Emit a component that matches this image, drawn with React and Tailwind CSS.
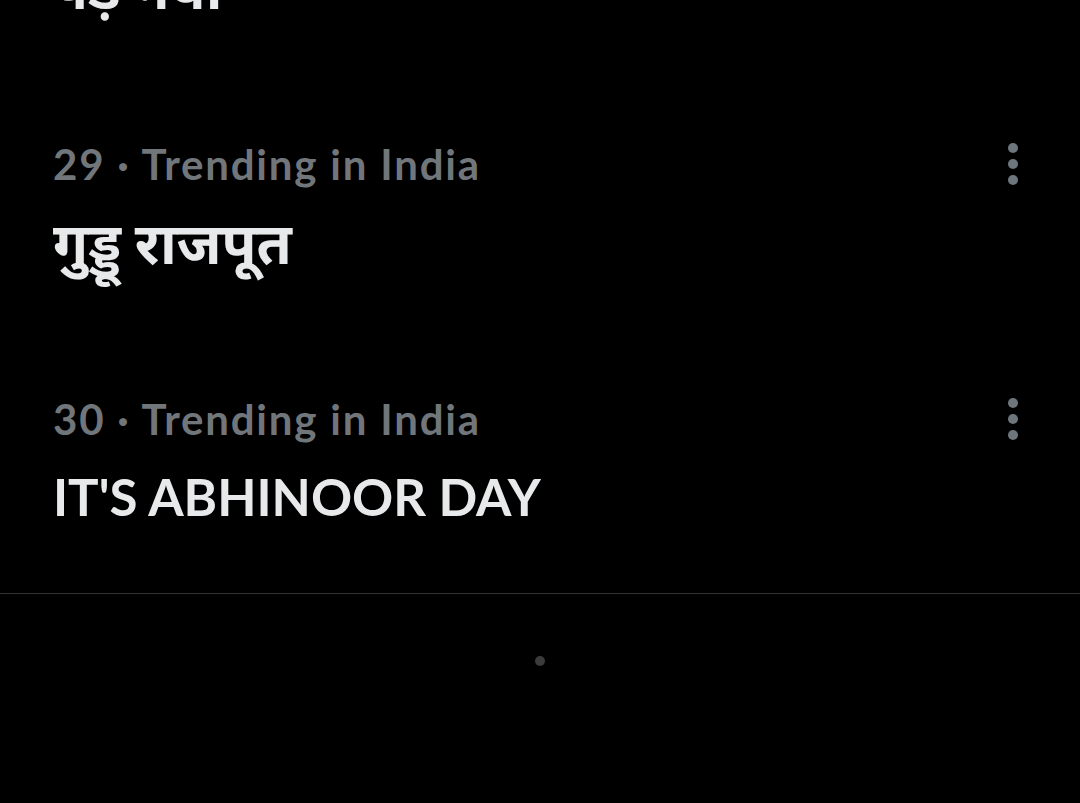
import { memo } from "react";

const trends = [
  { rank: 28, place: "Trending in India", title: "पड़ गया", hindi: true },
  { rank: 29, place: "Trending in India", title: "गुड्डू राजपूत", hindi: true },
  { rank: 30, place: "Trending in India", title: "IT'S ABHINOOR DAY" },
];

function MoreIcon() {
  return (
    <svg width="24" height="44" viewBox="0 0 24 44" className="text-[#6e767d]">
      <circle cx="12" cy="6" r="5" fill="currentColor" />
      <circle cx="12" cy="22" r="5" fill="currentColor" />
      <circle cx="12" cy="38" r="5" fill="currentColor" />
    </svg>
  );
}

const TrendRow = memo(function TrendRow({ trend }) {
  return (
    <div className="flex items-start justify-between pl-[53px] pr-[55px] pt-[58px] pb-[61px]">
      <div className="flex flex-col">
        <p className="text-[42px] leading-[56px] font-bold tracking-[1.8px] text-[#71767b]">
          {trend.rank} · {trend.place}
        </p>
        {trend.hindi ? (
          <h3 className="mt-[20px] text-[57px] leading-[60px] font-bold text-[#e7e9ea]">
            {trend.title}
          </h3>
        ) : (
          <h3 className="mt-[20px] text-[51px] leading-[60px] font-bold text-[#e7e9ea]">
            {trend.title}
          </h3>
        )}
      </div>
      <button className="mt-[6px]">
        <MoreIcon />
      </button>
    </div>
  );
});

export default function App() {
  return (
    <div
      className="w-[1080px] h-[803px] overflow-hidden bg-black"
      style={{ fontFamily: "Lato, 'Noto Sans', 'Noto Sans Devanagari', sans-serif" }}
    >
      <div className="-mt-[177px]">
        {trends.map((t) => (
          <TrendRow key={t.rank} trend={t} />
        ))}
      </div>
      <div className="mt-[5px] border-t border-[#2f3336]" />
      <div className="flex justify-center pt-[62px]">
        <span className="w-[10px] h-[10px] rounded-full bg-[#3b3b3b]" />
      </div>
    </div>
  );
}
